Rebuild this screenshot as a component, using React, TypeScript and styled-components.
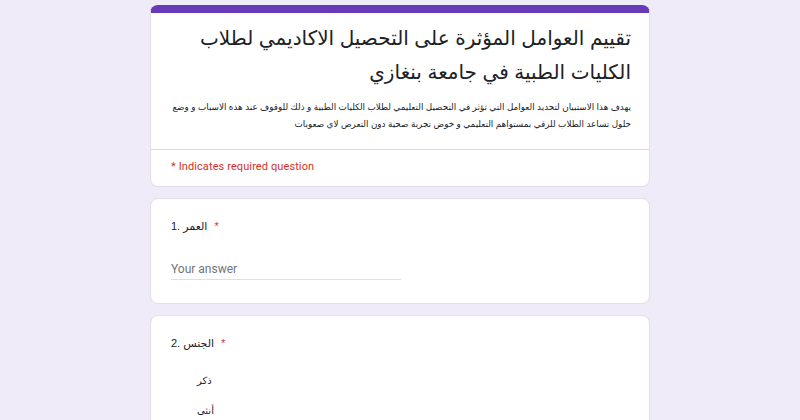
import styled, { createGlobalStyle } from 'styled-components'

const GlobalStyle = createGlobalStyle`
  body {
    margin: 0;
    background: #f0ebf8;
    font-family: 'Liberation Sans', 'DejaVu Sans', sans-serif;
    color: #202124;
  }
`

const Page = styled.main`
  width: 500px;
  margin: 0 auto;
  padding-top: 5px;
  display: flex;
  flex-direction: column;
  gap: 11px;
`

const Card = styled.section`
  background: #fff;
  border: 1px solid #e2dfe8;
  border-radius: 8px;
  overflow: hidden;
`

const HeaderCard = styled(Card)`
  border-top: 8px solid #673ab7;
`

const HeaderBody = styled.div`
  direction: rtl;
  padding: 8px 18px 16px 20px;
`

const Title = styled.h1`
  margin: 0;
  font-size: 20px;
  font-weight: 400;
  line-height: 34px;
`

const Description = styled.p`
  margin: 10px 0 0;
  font-size: 8.8px;
  line-height: 17px;
  color: #202124;
`

const RequiredNote = styled.div`
  border-top: 1px solid #dadce0;
  padding: 10px 20px 12px;
  font-family: Roboto, sans-serif;
  font-size: 11px;
  line-height: 14px;
  letter-spacing: 0.1px;
  color: #d93025;
`

const QuestionCard = styled(Card)`
  padding: 19px 20px 23px;
`

const QuestionTitle = styled.div`
  display: flex;
  gap: 7px;
  font-size: 11px;
  line-height: 16px;
`

const Star = styled.span`
  color: #d93025;
`

const AnswerInput = styled.input`
  margin-top: 24px;
  width: 230px;
  padding: 4px 0 3px;
  border: none;
  border-bottom: 1px solid #e0e0e0;
  font-family: Roboto, sans-serif;
  font-size: 12px;
  color: #202124;
  outline: none;

  &::placeholder {
    color: #70757a;
  }
`

const Options = styled.div`
  display: flex;
  flex-direction: column;
  gap: 14px;
  margin-top: 22px;
  padding-left: 26px;
`

const Option = styled.label`
  font-size: 10px;
  line-height: 16px;
  color: #202124;
`

const questions = {
  age: 'العمر',
  gender: 'الجنس',
}

export default function App() {
  return (
    <>
      <GlobalStyle />
      <Page>
        <HeaderCard>
          <HeaderBody>
            <Title>تقييم العوامل المؤثرة على التحصيل الاكاديمي لطلاب الكليات الطبية في جامعة بنغازي</Title>
            <Description>
              يهدف هذا الاستبيان لتحديد العوامل التي تؤثر في التحصيل التعليمي لطلاب الكليات الطبية و ذلك للوقوف عند هذه الاسباب و وضع حلول تساعد الطلاب للرقي بمستواهم التعليمي و خوض تجربة صحية دون التعرض لاي صعوبات
            </Description>
          </HeaderBody>
          <RequiredNote>* Indicates required question</RequiredNote>
        </HeaderCard>

        <QuestionCard>
          <QuestionTitle>
            <span>1. {questions.age}</span>
            <Star>*</Star>
          </QuestionTitle>
          <AnswerInput placeholder="Your answer" />
        </QuestionCard>

        <QuestionCard>
          <QuestionTitle>
            <span>2. {questions.gender}</span>
            <Star>*</Star>
          </QuestionTitle>
          <Options>
            <Option>ذكر</Option>
            <Option>أنثى</Option>
          </Options>
        </QuestionCard>
      </Page>
    </>
  )
}
